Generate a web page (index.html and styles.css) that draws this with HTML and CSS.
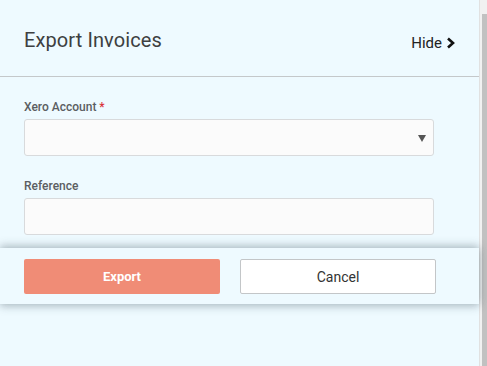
FILE: index.html
```html
<!DOCTYPE html>
<html lang="en">
<head>
    <meta charset="UTF-8">
    <meta name="viewport" content="width=device-width, initial-scale=1.0">
    <title>Export Invoices</title>
    <link rel="stylesheet" href="styles.css">
</head>
<body>
    <div class="frame">
        <div class="panel">
            <div class="panel-header">
                <h1>Export Invoices</h1>
                <a class="hide-link" href="#">Hide
                    <svg width="10" height="12" viewBox="0 0 10 12"><path d="M2 1.5 L7 6 L2 10.5" fill="none" stroke="#111" stroke-width="2.6"/></svg>
                </a>
            </div>

            <div class="panel-body">
                <div class="field">
                    <label for="account">Xero Account <span class="req">*</span></label>
                    <div class="select-box" id="account">
                        <span class="caret"></span>
                    </div>
                </div>

                <div class="field">
                    <label for="reference">Reference</label>
                    <input type="text" id="reference">
                </div>
            </div>

            <div class="panel-footer">
                <button class="btn btn-export">Export</button>
                <button class="btn btn-cancel">Cancel</button>
            </div>
        </div>

        <div class="scrollbar">
            <div class="scroll-arrow"></div>
            <div class="scroll-thumb"></div>
        </div>
    </div>
</body>
</html>
```

FILE: styles.css
```css
* {
    margin: 0;
    padding: 0;
    box-sizing: border-box;
    font-family: Roboto, 'Liberation Sans', sans-serif;
}

body {
    background: #eefaff;
    height: 366px;
    overflow: hidden;
}

.frame {
    display: flex;
    height: 366px;
}

.panel {
    flex: 1;
    background: #eefaff;
}

.panel-header {
    display: flex;
    justify-content: space-between;
    align-items: center;
    height: 77px;
    padding: 0 23px 0 24px;
    border-bottom: 1px solid #c4c8ca;
}

h1 {
    font-size: 20px;
    font-weight: 400;
    color: #3d3f41;
    letter-spacing: 0.1px;
    margin-top: 4px;
}

.hide-link {
    display: flex;
    align-items: center;
    gap: 4px;
    font-size: 15px;
    color: #222;
    text-decoration: none;
    margin-top: 9px;
}

.panel-body {
    padding: 23px 45px 13px 24px;
}

.field {
    margin-bottom: 23px;
}

.field:last-child {
    margin-bottom: 0;
}

label {
    display: block;
    font-size: 12px;
    font-weight: 500;
    color: #5b5e62;
    margin-bottom: 5px;
}

.req {
    color: #d9343a;
}

.select-box,
input {
    display: block;
    width: 410px;
    height: 37px;
    background: #fbfbfb;
    border: 1px solid #d8dadc;
    border-radius: 3px;
    position: relative;
}

.caret {
    position: absolute;
    right: 7px;
    top: 15px;
    border-left: 4px solid transparent;
    border-right: 4px solid transparent;
    border-top: 7px solid #555;
}

.panel-footer {
    display: flex;
    gap: 20px;
    padding: 11px 43px 10px 24px;
    box-shadow: 0 -3px 8px rgba(60, 80, 90, 0.28), 0 3px 8px rgba(60, 80, 90, 0.28);
    position: relative;
}

.btn {
    width: 196px;
    height: 35px;
    font-size: 13px;
    border-radius: 2px;
    cursor: pointer;
}

.btn-export {
    background: #f08c76;
    color: #fff;
    font-weight: 700;
    border: none;
}

.btn-cancel {
    background: #fff;
    color: #333;
    font-size: 14px;
    border: 1px solid #c3c6c8;
}

.scrollbar {
    width: 8px;
    background: #f1f1f1;
    border-left: 1px solid #e1e1e1;
    display: flex;
    flex-direction: column;
}

.scroll-arrow {
    height: 14px;
}

.scroll-thumb {
    flex: 1;
    margin-left: 2px;
    background: #c1c1c1;
}
```
